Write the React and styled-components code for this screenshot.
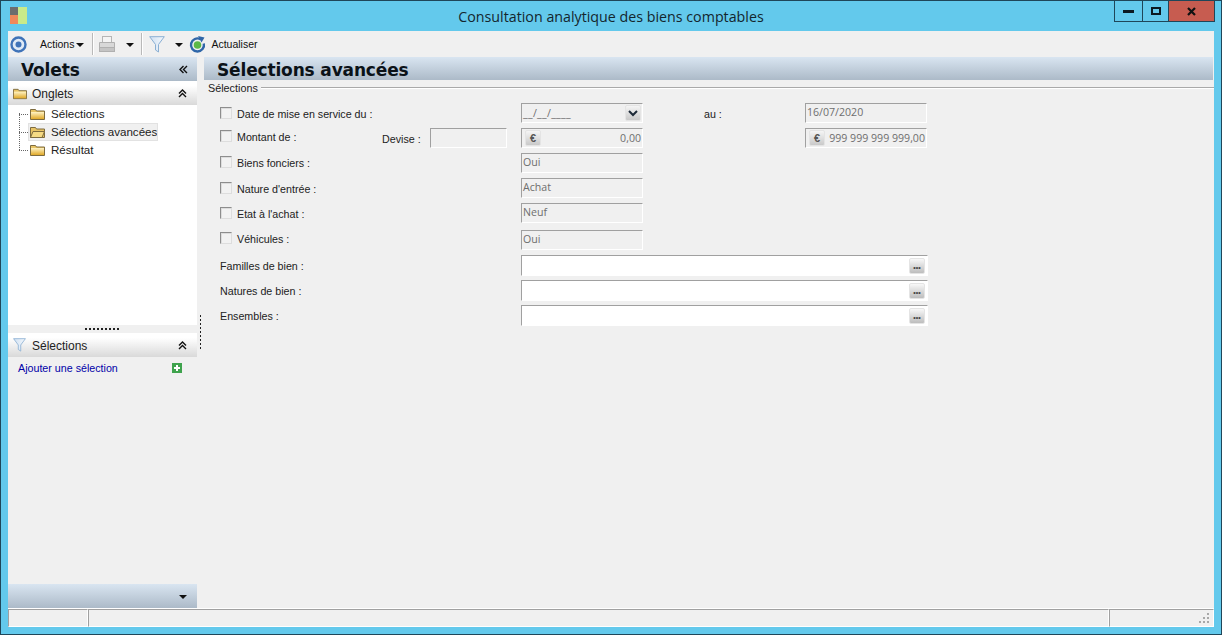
import React from "react";
import styled, { createGlobalStyle } from "styled-components";

const Global = createGlobalStyle`
  html, body { margin: 0; padding: 0; background: #63c9ec; }
  * { box-sizing: border-box; }
`;
const label = `"Liberation Sans", Arial, sans-serif`;
const tahoma = `"DejaVu Sans", Verdana, sans-serif`;
const value = `"Open Sans", Tahoma, sans-serif`;

const Win = styled.div`
  width: 1222px; height: 635px; overflow: hidden; display: flex; flex-direction: column;
  background: #63c9ec; border: 1px solid #1f4659; padding: 0 7px 7px 7px;
  font: 11px ${label}; color: #111;
`;
const TitleBar = styled.div`
  height: 30px; display: grid; grid-template-columns: 1fr auto 1fr; margin: 0 -7px; flex: none;
`;
const LogoCell = styled.div`padding-left: 9px;`;
const AppLogo = styled.svg`width: 17px; height: 17px; margin-top: 6px; display: block;`;
const Title = styled.div`
  font: 14.25px "Open Sans", sans-serif; color: #14262e; padding-top: 6px; white-space: nowrap;
`;
const WinBtns = styled.div`display: flex; justify-content: flex-end; align-items: flex-start; padding-right: 6px;`;
const WinBtn = styled.div`
  width: ${p => p.$w}px; height: 21px; display: flex; align-items: center; justify-content: center;
  border: 1px solid #1f4659; border-top: 0; margin-left: -1px; background: ${p => p.$bg || "transparent"};
`;
const Toolbar = styled.div`
  height: 26px; flex: none; background: #f0f0f0; display: flex; align-items: center; padding-left: 2px;
  font: 10.5px ${label};
`;
const ToolIcon = styled.svg`display: block; flex: none; margin-left: ${p => p.$ml || 0}px;`;
const ToolText = styled.span`margin-left: ${p => p.$ml || 0}px; white-space: nowrap;`;
const Caret = styled.i`
  flex: none; width: 0; height: 0; margin-left: ${p => p.$ml || 0}px; margin-top: 2px;
  border: 4px solid transparent; border-top: 4px solid #111; border-bottom: 0;
`;
const Sep = styled.i`width: 1px; height: 22px; background: #b9b9b9; flex: none; margin-left: ${p => p.$ml}px; box-shadow: 1px 0 #fff;`;
const Body = styled.div`flex: 1; min-height: 0; display: flex; background: #f0f0f0;`;
const Side = styled.div`width: 189px; flex: none; display: flex; flex-direction: column;`;
const blueGrad = `linear-gradient(#d9e5f1, #acbac8)`;
const SideHead = styled.div`
  height: 24px; flex: none; background: ${blueGrad}; display: flex; align-items: center; justify-content: space-between;
  padding: 1px 9px 0 13px; font: bold 17px ${tahoma}; letter-spacing: -0.15px; color: #0b1218;
`;
const Collapse = styled.svg`width: 9px; height: 9px; display: block;`;
const Section = styled.div`
  height: 24px; flex: none; background: linear-gradient(#fff 20%, #d9d9d9); display: flex; align-items: center;
  padding: 0 10px 0 5px; font: 12px ${label}; color: #222;
`;
const SectionText = styled.span`flex: 1; margin-left: ${p => p.$ml}px; padding-top: 1px;`;
const Tree = styled.div`
  height: 220px; flex: none; background: #fff; position: relative; padding: 0 0 0 22px; font: 11.6px ${label}; color: #222;
`;
const TreeLine = styled.i`
  position: absolute; left: 11px; top: 8px; height: 37px; width: 10px;
  border-left: 1px dotted #666;
`;
const TreeRow = styled.div`
  height: 18px; display: flex; align-items: center; position: relative; gap: 6px; margin-left: -2px; padding: 0 0 2px 2px; width: 130px; white-space: nowrap;
  background: ${p => p.$sel ? "#f0f0f0" : "transparent"};
  outline: ${p => p.$sel ? "1px solid #e2e2e2" : "none"}; outline-offset: -1px;
  &::before { content: ""; position: absolute; left: -9px; top: 9px; width: 9px; border-top: 1px dotted #666; }
`;
const HSplit = styled.div`height: 8px; flex: none; display: flex; align-items: center; justify-content: center;`;
const HDots = styled.i`width: 35px; height: 2px; background: repeating-linear-gradient(90deg, #222 0 2px, transparent 2px 4px);`;
const LinkRow = styled.div`
  height: 21px; flex: none; display: flex; align-items: center; justify-content: space-between; padding: 0 15px 0 10px;
  font: 10.7px ${label}; color: #0000a8;
`;
const Spacer = styled.div`flex: 1;`;
const BottomBar = styled.div`
  height: 24px; flex: none; background: ${blueGrad}; display: flex; align-items: center; justify-content: flex-end; padding-right: 10px;
`;
const VSplit = styled.div`width: 7px; flex: none; display: flex; align-items: center; justify-content: center;`;
const VDots = styled.i`height: 36px; width: 1px; background: repeating-linear-gradient(#222 0 2px, transparent 2px 4px);`;
const Main = styled.div`flex: 1; min-width: 0; display: flex; flex-direction: column;`;
const MainHead = styled.div`
  height: 23px; flex: none; background: ${blueGrad}; padding-left: 13px; font: bold 17px/26px ${tahoma}; letter-spacing: -0.15px; color: #0b1218; margin-right: 1px;
`;
const Legend = styled.div`
  height: 15px; display: flex; align-items: center; padding-left: 4px; font: 10.8px ${label}; color: #222; flex: none;
`;
const LegendLine = styled.i`flex: 1; height: 2px; margin-left: 3px; border-top: 1px solid #a9a9a9; border-bottom: 1px solid #fff;`;
const Form = styled.div`
  display: grid; padding: 8px 0 0 16px;
  grid-template-columns: 162px 48px 77px 14px 122px 61px 101px 122px;
  grid-template-rows: 25px 25px 25px 25px 27px 25px 25px 25px 25px;
`;
const Check = styled.label`
  grid-column: 1; display: flex; align-items: center; gap: 5px; height: 20px; padding: 2px 0 ${p => p.$up || 0}px;
  font: 10.7px ${label}; color: #222; white-space: nowrap;
`;
const Box = styled.i`
  width: 12px; height: 12px; flex: none; background: #f2f2f2; border: 1px solid #8d8d8d; border-right-color: #ddd; border-bottom-color: #ddd;
  box-shadow: inset 1px 1px 0 #ddd; margin-top: -2px;
`;
const Lab = styled.div`
  grid-column: ${p => p.$col}; display: flex; align-items: center; height: 20px; padding-top: 2px; font: 10.7px ${label}; color: #222; white-space: nowrap;
`;
const Field = styled.div`
  grid-column: ${p => p.$col}; display: flex; align-items: ${p => p.$top ? "flex-start" : "center"}; justify-content: space-between;
  height: ${p => p.$white ? 21 : 20}px; padding: ${p => p.$top ? "1px 1px 0 1px" : "0 1px 0 1px"};
  margin-right: ${p => p.$white ? -1 : 0}px;
  border: 1px solid; border-color: #a0a0a0 #fff #fff #a0a0a0;
  background: ${p => p.$white ? "#fff" : "#f0f0f0"};
  font: 10.6px/14px ${value}; color: #6e6e6e; white-space: nowrap; overflow: hidden;
`;
const Mask = styled.span`letter-spacing: 0.3px;`;
const Mini = styled.span`
  width: 16px; height: 16px; border: 1px solid #e4e4e4; border-radius: 2px; background: linear-gradient(#f5f5f5, #c9c9c9);
  display: inline-flex; align-items: center; justify-content: center; flex: none; color: #333;
`;
const Euro = styled(Mini)`font: bold 11px ${label}; color: #555; margin-left: 2px;`;
const Dots = styled(Mini)`
  font: bold 7px/8px ${label}; color: #444; margin-right: 1px; margin-top: 1px; padding-top: 3px; background: linear-gradient(#f8f8f8, #bdbdbd);
`;
const Status = styled.div`
  height: 19px; flex: none; display: grid; grid-template-columns: 80px 1021px 1fr; border-top: 1px solid #fff; background: #f0f0f0;
`;
const StatusCell = styled.div`
  border: 1px solid; border-color: #a0a0a0 #fff #fff #a0a0a0; position: relative;
`;
const Grip = styled.svg`position: absolute; right: 2px; bottom: 1px; width: 12px; height: 12px;`;

const Folder = ({ open, w = 15, h = 11 }) => (
  <svg width={w} height={h} viewBox="0 0 15 11" style={{ display: "block", flex: "none", marginTop: 2 }}>
    <defs><linearGradient id="fg" x1="0" y1="0" x2="0" y2="1"><stop offset="0" stopColor="#fff3c4" /><stop offset="1" stopColor="#e0a92a" /></linearGradient></defs>
    <path d="M.5 10.5V.5h5l1 1.5h8v8.5z" fill="#e8c465" stroke="#7d6b3f" />
    {open
      ? <path d="M.5 10.5 3 4.5h11.5l-2.5 6z" fill="#f5da84" stroke="#7d6b3f" />
      : <rect x="1" y="3" width="13" height="7" fill="url(#fg)" />}
  </svg>
);
const Funnel = ({ w = 16, h = 17 }) => (
  <svg width={w} height={h} viewBox="0 0 16 17" style={{ display: "block", flex: "none" }}>
    <defs><linearGradient id="fn" x1="0" y1="0" x2="1" y2="0"><stop offset="0" stopColor="#cfe0f2" /><stop offset="1" stopColor="#f4f8fc" /></linearGradient></defs>
    <path d="M.7 .7h14.6L9.5 8.5v7.5L6.5 14V8.5z" fill="url(#fn)" stroke="#8aafd3" />
  </svg>
);
const Chevrons = ({ left }) => (
  <Collapse viewBox="0 0 9 9" style={left ? { transform: "rotate(-90deg)" } : undefined}>
    <path d="M1 4.5 4.5 1 8 4.5M1 8 4.5 4.5 8 8" fill="none" stroke="#111" strokeWidth="1.4" />
  </Collapse>
);

export default function App() {
  return (
    <Win>
      <Global />
      <TitleBar>
        <LogoCell>
          <AppLogo viewBox="0 0 17 17">
            <rect x="0" y="0" width="8" height="8" fill="#6d6d6d" />
            <rect x="0" y="8" width="8" height="9" fill="#f0885a" />
            <rect x="8" y="0" width="9" height="17" fill="#c9ea8a" />
          </AppLogo>
        </LogoCell>
        <Title>Consultation analytique des biens comptables</Title>
        <WinBtns>
          <WinBtn $w={29}><svg width="11" height="3"><rect width="11" height="3" fill="#0b1a22" /></svg></WinBtn>
          <WinBtn $w={27}><svg width="10" height="8"><rect x="1" y="1" width="8" height="6" fill="none" stroke="#0b1a22" strokeWidth="2" /></svg></WinBtn>
          <WinBtn $w={47} $bg="#c75c50"><svg width="9" height="9"><path d="M1 1 8 8M8 1 1 8" stroke="#111" strokeWidth="2.2" /></svg></WinBtn>
        </WinBtns>
      </TitleBar>
      <Toolbar>
        <ToolIcon width="17" height="17" viewBox="0 0 17 17">
          <circle cx="8.5" cy="8.5" r="7" fill="#dfeaf6" stroke="#3f73b8" strokeWidth="2.4" />
          <circle cx="8.5" cy="8.5" r="3" fill="#3f73b8" />
        </ToolIcon>
        <ToolText $ml={13}>Actions</ToolText>
        <Caret $ml={2} />
        <Sep $ml={8} />
        <ToolIcon $ml={5} width="18" height="18" viewBox="0 0 18 18">
          <rect x="4.5" y="1.5" width="9" height="6" fill="#f4f4f4" stroke="#b5b5b5" />
          <path d="M1.5 7.5h15v7h-15z" fill="#d8d8d8" stroke="#b0b0b0" />
          <rect x="1.5" y="12.5" width="15" height="4" fill="#c4c4c4" stroke="#b0b0b0" />
        </ToolIcon>
        <Caret $ml={10} />
        <Sep $ml={7} />
        <ToolIcon as="span" $ml={7}><Funnel /></ToolIcon>
        <Caret $ml={10} />
        <ToolIcon $ml={6} width="17" height="17" viewBox="0 0 17 17">
          <path d="M11.5 3.2A6.5 6.5 0 1 0 14.8 7.5" fill="none" stroke="#2f66a8" strokeWidth="2.4" />
          <path d="M9 0l6.5 1.5-3 5z" fill="#2f66a8" />
          <circle cx="8.5" cy="9" r="3.8" fill="#5cb848" />
        </ToolIcon>
        <ToolText $ml={5}>Actualiser</ToolText>
      </Toolbar>
      <Body>
        <Side>
          <SideHead>Volets<Chevrons left /></SideHead>
          <Section><Folder w={14} h={12} /><SectionText $ml={5}>Onglets</SectionText><Chevrons /></Section>
          <Tree>
            <TreeLine />
            <TreeRow><Folder /><span>Sélections</span></TreeRow>
            <TreeRow $sel><Folder open /><span>Sélections avancées</span></TreeRow>
            <TreeRow><Folder /><span>Résultat</span></TreeRow>
          </Tree>
          <HSplit><HDots /></HSplit>
          <Section><Funnel w={13} h={14} /><SectionText $ml={6}>Sélections</SectionText><Chevrons /></Section>
          <LinkRow>
            <span>Ajouter une sélection</span>
            <svg width="10" height="10"><rect width="10" height="10" fill="#3fa34d" /><path d="M5 2v6M2 5h6" stroke="#fff" strokeWidth="2" /></svg>
          </LinkRow>
          <Spacer />
          <BottomBar><Caret /></BottomBar>
        </Side>
        <VSplit><VDots /></VSplit>
        <Main>
          <MainHead>Sélections avancées</MainHead>
          <Legend>Sélections<LegendLine /></Legend>
          <Form>
            <Check><Box />Date de mise en service du :</Check>
            <Field $col={5}><Mask>__/__/____</Mask><Mini><svg width="10" height="7"><path d="M1 1l4 4 4-4" fill="none" stroke="#1d2a38" strokeWidth="2" /></svg></Mini></Field>
            <Lab $col={7}>au :</Lab>
            <Field $col={8} $top>16/07/2020</Field>

            <Check $up={4}><Box />Montant de :</Check>
            <Lab $col={2}>Devise :</Lab>
            <Field $col={3} />
            <Field $col={5}><Euro>€</Euro>0,00</Field>
            <Field $col={8}><Euro>€</Euro>999 999 999 999,00</Field>

            <Check $up={2}><Box />Biens fonciers :</Check>
            <Field $col={5} $top>Oui</Field>

            <Check><Box />Nature d'entrée :</Check>
            <Field $col={5} $top>Achat</Field>

            <Check><Box />Etat à l'achat :</Check>
            <Field $col={5} $top>Neuf</Field>

            <Check $up={4}><Box />Véhicules :</Check>
            <Field $col={5} $top>Oui</Field>

            <Lab $col="1 / 5">Familles de bien :</Lab>
            <Field $col="5 / 9" $white><span /><Dots>•••</Dots></Field>
            <Lab $col="1 / 5">Natures de bien :</Lab>
            <Field $col="5 / 9" $white><span /><Dots>•••</Dots></Field>
            <Lab $col="1 / 5">Ensembles :</Lab>
            <Field $col="5 / 9" $white><span /><Dots>•••</Dots></Field>
          </Form>
        </Main>
      </Body>
      <Status>
        <StatusCell />
        <StatusCell />
        <StatusCell>
          <Grip viewBox="0 0 12 12" fill="#a8a8a8">
            <rect x="8" y="0" width="2" height="2" /><rect x="4" y="4" width="2" height="2" /><rect x="8" y="4" width="2" height="2" />
            <rect x="0" y="8" width="2" height="2" /><rect x="4" y="8" width="2" height="2" /><rect x="8" y="8" width="2" height="2" />
          </Grip>
        </StatusCell>
      </Status>
    </Win>
  );
}
